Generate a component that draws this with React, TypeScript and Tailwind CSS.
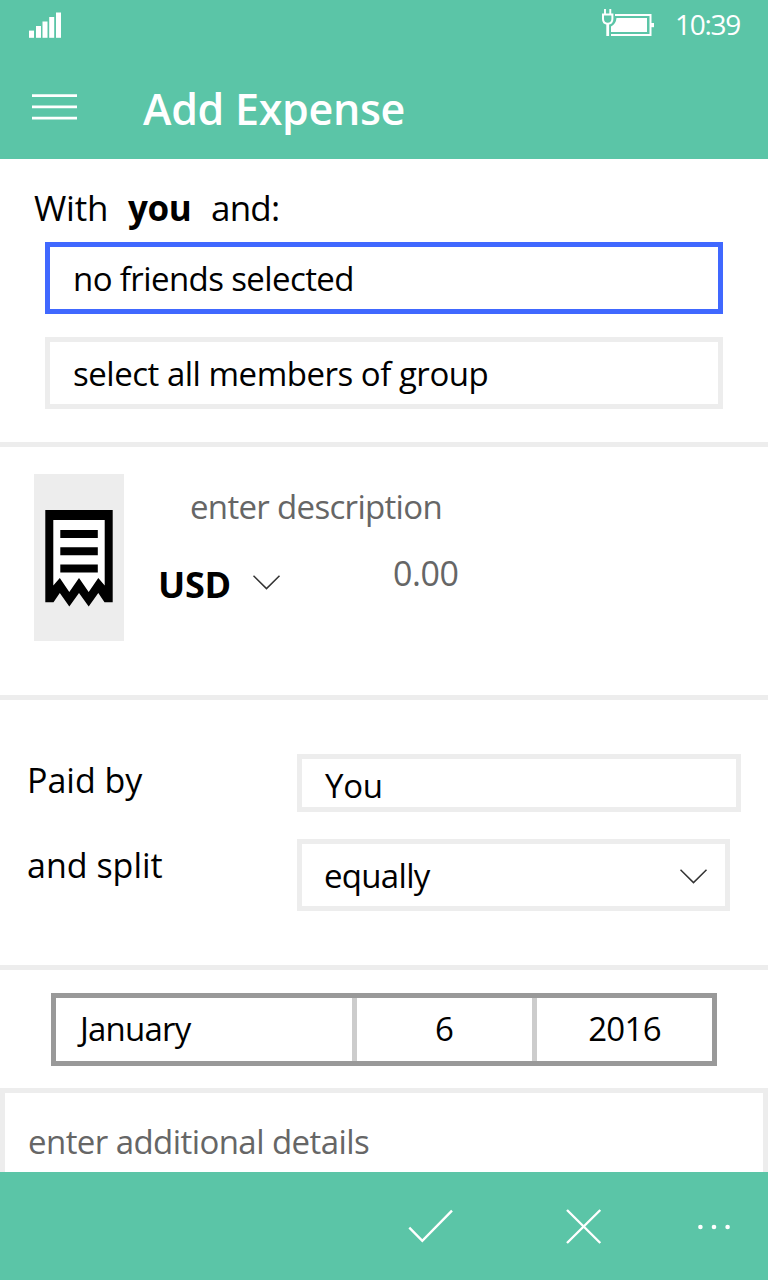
import React from "react";

function SignalIcon() {
  return (
    <svg width="32" height="26" viewBox="29 12 32 26" fill="#fff" className="mt-3">
      <rect x="29" y="30.6" width="5" height="7.2" />
      <rect x="36" y="26" width="5" height="11.8" />
      <rect x="42.5" y="21.5" width="5" height="16.3" />
      <rect x="49.2" y="17" width="5" height="20.8" />
      <rect x="56" y="12.5" width="5" height="25.3" />
    </svg>
  );
}

function BatteryIcon() {
  return (
    <svg width="54" height="30" viewBox="601 8 54 30" className="mt-2">
      <path d="M615 15H650.5V35H611" fill="none" stroke="#fff" strokeWidth="2" />
      <rect x="651" y="23" width="3" height="4.2" fill="#fff" />
      <path d="M616.5 18H647V32H611V26.5Q616 24 616.5 18Z" fill="#fff" />
      <path d="M605 9V14M610.3 9V14" stroke="#fff" strokeWidth="1.9" />
      <path d="M603 14.5H612.4V19Q612.4 23.5 607.7 23.8Q603 23.5 603 19Z" fill="none" stroke="#fff" strokeWidth="2" />
      <path d="M607.7 24V36" stroke="#fff" strokeWidth="2.8" />
    </svg>
  );
}

function MenuIcon() {
  return (
    <svg width="45" height="28" viewBox="32 93 45 28" className="mt-[45px]">
      <path d="M32 95.6H77M32 106.9H77M32 118.1H77" stroke="#fff" strokeWidth="2.6" />
    </svg>
  );
}

function Chevron() {
  return (
    <svg width="28" height="16" viewBox="0 0 28 16" fill="none" stroke="#333" strokeWidth="1.5">
      <path d="M0.5 1.8L13.5 14.6L26.5 1.8" />
    </svg>
  );
}

function ReceiptIcon() {
  return (
    <svg width="68" height="98" viewBox="45 509 68 98">
      <path
        d="M45.3 510H112.7V602.2H104.5L98.3 593L88.7 606.5L79 593L69.3 606.5L59.8 593L53.5 602.2H45.3Z"
        fill="#000"
      />
      <path
        d="M53.3 520H104.7V585.5L98.3 578L88.7 592L79 578L69.3 592L59.8 578L53.3 585.5Z"
        fill="#fff"
      />
      <path d="M60.3 534H97.8M60.3 551.2H97.8M60.3 568.5H97.8" stroke="#000" strokeWidth="8" />
    </svg>
  );
}

export default function App() {
  return (
    <div className="flex h-[1280px] w-[768px] flex-col overflow-hidden bg-white font-['Open_Sans',sans-serif] text-[33px] leading-10 text-black">
      <header className="h-[159px] shrink-0 bg-[#5bc5a7] text-white">
        <div className="flex h-12 items-start pr-7 pl-[29px]">
          <SignalIcon />
          <div className="ml-auto flex">
            <BatteryIcon />
            <span className="mt-[4px] ml-[20px] w-[65px] text-[28px] tracking-[-1.3px] whitespace-nowrap">10:39</span>
          </div>
        </div>
        <div className="flex items-start pl-8">
          <MenuIcon />
          <h1 className="mt-[31px] ml-[66px] text-[43px] leading-[60px] font-semibold tracking-[-0.3px]">Add Expense</h1>
        </div>
      </header>

      <section className="h-[288px] shrink-0 border-b-5 border-[#ededed] pt-[29px]">
        <div className="flex pl-[34px] text-[35px]">
          <span className="w-[94px] tracking-[-0.2px]">With</span>
          <b className="w-[83px] tracking-[-0.4px]">you</b>
          <span className="tracking-[-0.8px]">and:</span>
        </div>
        <div className="mx-[45px] mt-[14px] flex h-[72px] items-center border-5 border-[#4068ff] pt-px pl-[23px] tracking-[-0.6px]">
          no friends selected
        </div>
        <div className="mx-[45px] mt-[23px] flex h-[72px] items-center border-5 border-[#ededed] pt-px pl-[23px] tracking-[-0.48px]">
          select all members of group
        </div>
      </section>

      <section className="flex h-[253px] shrink-0 items-start border-b-5 border-[#ededed] pt-[27px] pl-[34px]">
        <div className="flex h-[167px] w-[90px] justify-center bg-[#ededed] pt-[35px]">
          <ReceiptIcon />
        </div>
        <div className="ml-[34px] pt-[13px]">
          <p className="pl-8 tracking-[-0.68px] text-[#666]">enter description</p>
          <div className="mt-[26px] flex items-start">
            <b className="mt-[12px] w-[95px] text-[36px] tracking-[-0.3px]">USD</b>
            <div className="mt-[21px] w-[140px]">
              <Chevron />
            </div>
            <span className="text-[34px] tracking-[-0.4px] text-[#666]">0.00</span>
          </div>
        </div>
      </section>

      <section className="h-[270px] shrink-0 border-b-5 border-[#ededed] pt-[54px] pl-[27px]">
        <div className="flex items-start">
          <span className="mt-[6px] w-[270px] text-[34px]">Paid by</span>
          <div className="flex h-[58px] w-[444px] items-center border-5 border-[#ededed] pt-[6px] pl-[23px] tracking-[-0.3px]">You</div>
        </div>
        <div className="mt-[27px] flex items-start">
          <span className="mt-[6px] w-[270px] text-[34px]">and split</span>
          <div className="flex h-[72px] w-[433px] items-center justify-between border-5 border-[#ededed] pt-px pr-[17px] pl-[22px]">
            <span className="tracking-[-0.7px]">equally</span>
            <Chevron />
          </div>
        </div>
      </section>

      <section className="h-[118px] shrink-0 pt-[23px] pl-[51px]">
        <div className="flex h-[73px] w-[666px] border-5 border-[#999] *:flex *:items-center *:pb-[2px]">
          <div className="w-[301px] border-r-5 border-[#ccc] pl-[24px] tracking-[-0.8px]">January</div>
          <div className="w-[180px] justify-center border-r-5 border-[#ccc]">6</div>
          <div className="w-[175px] justify-center tracking-[-0.7px]">2016</div>
        </div>
      </section>

      <div className="h-[84px] shrink-0 border-x-5 border-t-5 border-[#ededed] pt-[29px] pl-[23px] tracking-[-0.57px] text-[#666]">
        enter additional details
      </div>

      <footer className="flex h-[108px] shrink-0 items-center bg-[#5bc5a7] pl-[408px]">
        <svg width="46" height="36" viewBox="408 1208 46 36" fill="none" stroke="#fff" strokeWidth="2.4">
          <path d="M409.3 1227.7L422.3 1240.8L452 1210.7" />
        </svg>
        <svg width="36" height="36" viewBox="566 1208 36 36" className="ml-[112px]" stroke="#fff" strokeWidth="2.4">
          <path d="M567 1210L600.3 1243M600.3 1210L567 1243" />
        </svg>
        <svg width="36" height="8" viewBox="696 1223 36 8" className="mt-[2px] ml-[94px]" fill="#fff">
          <circle cx="700.4" cy="1227" r="2.3" />
          <circle cx="714" cy="1227" r="2.3" />
          <circle cx="727.6" cy="1227" r="2.3" />
        </svg>
      </footer>
    </div>
  );
}
